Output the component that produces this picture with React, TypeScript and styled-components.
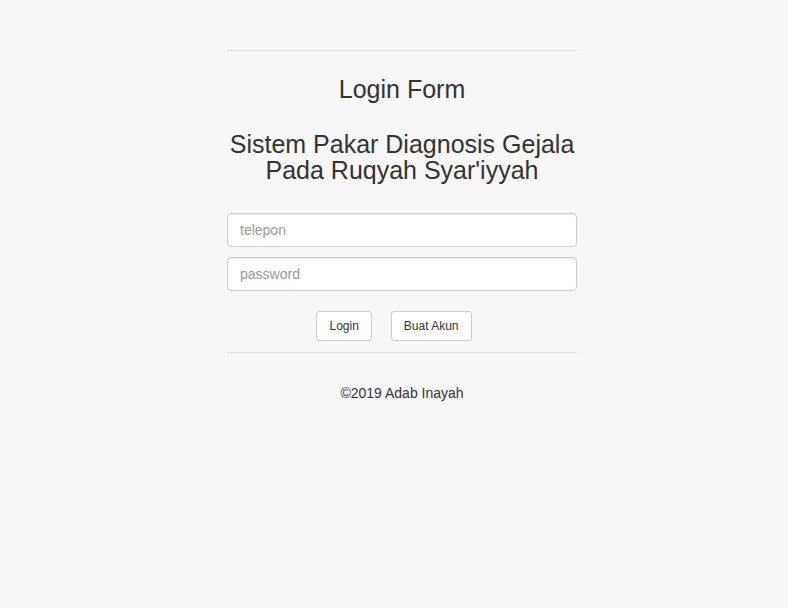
import React from 'react';
import styled, { createGlobalStyle } from 'styled-components';

const GlobalStyle = createGlobalStyle`
  html, body {
    margin: 0;
    padding: 0;
    background: #f7f7f7;
    color: #333;
    font-family: "Liberation Sans", Arial, Helvetica, sans-serif;
    font-size: 14px;
  }
  * {
    box-sizing: border-box;
  }
`;

const Shell = styled.div`
  padding-left: 16px;
`;

const Page = styled.div`
  width: 350px;
  margin: 0 auto;
  padding-top: 50px;
`;

const Rule = styled.hr<{ $top?: number }>`
  margin: ${(p) => p.$top ?? 0}px 0 0;
  border: 0;
  border-top: 1px solid #dcdcdc;
  height: 0;
`;

const Title = styled.h1<{ $top: number }>`
  margin: ${(p) => p.$top}px 0 0;
  font-size: 25px;
  font-weight: 400;
  line-height: 26px;
  text-align: center;
  color: #333;
`;

const Form = styled.form`
  display: flex;
  flex-direction: column;
  gap: 10px;
  margin-top: 30px;
`;

const Input = styled.input`
  display: block;
  width: 100%;
  height: 34px;
  padding: 6px 12px;
  font-family: inherit;
  font-size: 14px;
  color: #555;
  background: #fff;
  border: 1px solid #ccc;
  border-radius: 4px;
  box-shadow: inset 0 1px 1px rgba(0, 0, 0, 0.075);
  outline: none;

  &::placeholder {
    color: #999;
  }
`;

const Actions = styled.div`
  display: flex;
  justify-content: center;
  gap: 19px;
  margin-top: 10px;
  padding-right: 16px;
`;

const Button = styled.button`
  height: 30px;
  padding: 5px 12px;
  font-family: inherit;
  font-size: 12px;
  line-height: 18px;
  color: #333;
  background: #fff;
  border: 1px solid #ccc;
  border-radius: 3px;
  cursor: pointer;
`;

const Footer = styled.p`
  margin: 30px 0 0;
  line-height: 20px;
  text-align: center;
`;

export default function App() {
  return (
    <>
      <GlobalStyle />
      <Shell>
        <Page>
          <Rule />
          <Title $top={25}>Login Form</Title>
          <Title $top={29}>
            Sistem Pakar Diagnosis Gejala
            <br />
            Pada Ruqyah Syar'iyyah
          </Title>
          <Form onSubmit={(e) => e.preventDefault()}>
            <Input type="text" placeholder="telepon" />
            <Input type="password" placeholder="password" />
            <Actions>
              <Button type="submit">Login</Button>
              <Button type="button">Buat Akun</Button>
            </Actions>
          </Form>
          <Rule $top={11} />
          <Footer>©2019 Adab Inayah</Footer>
        </Page>
      </Shell>
    </>
  );
}
